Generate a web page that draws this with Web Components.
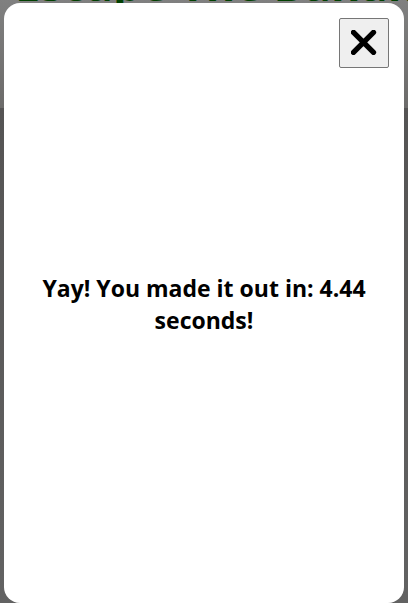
<!DOCTYPE html>
<html lang="en">
<head>
<meta charset="utf-8">
<meta name="viewport" content="width=device-width, initial-scale=1">
<title>Escape The Banana</title>
<style>
html, body { height: 100%; margin: 0; }
body { font-family: "Open Sans", "Noto Sans", sans-serif; color: #000; overflow: hidden; }
</style>
</head>
<body>
<game-page>
  <game-title slot="title">Escape The Banana</game-title>
  <win-dialog>Yay! You made it out in: 4.44 seconds!</win-dialog>
</game-page>
<script>
class GamePage extends HTMLElement {
  constructor() {
    super();
    this.attachShadow({ mode: "open" }).innerHTML = `
      <style>
        :host { display: grid; height: 100%; overflow: hidden; background: linear-gradient(#808080, #6c6b6a 108px, #555454 108px, #626262); }
        header, main { grid-area: 1 / 1; min-width: 0; min-height: 0; }
        main { display: grid; padding: 3px 4px 0; }
      </style>
      <header><slot name="title"></slot></header>
      <main><slot></slot></main>`;
  }
}
class GameTitle extends HTMLElement {
  constructor() {
    super();
    this.attachShadow({ mode: "open" }).innerHTML = `
      <style>
        :host { display: block; }
        h1 { margin: -46px 0 0; padding-left: 15px; font-size: 45px; line-height: 60px; font-weight: 700; color: #004000; white-space: nowrap; }
      </style>
      <h1><slot></slot></h1>`;
  }
}
class CloseButton extends HTMLElement {
  constructor() {
    super();
    this.attachShadow({ mode: "open" }).innerHTML = `
      <style>
        :host { display: block; }
        button { display: grid; place-items: center; box-sizing: border-box; width: 50px; height: 50px; margin: 0; padding: 0; border: 1px solid #767676; border-radius: 2px; background: #efefef; color: #000; cursor: pointer; }
        svg { display: block; width: 26px; height: 26px; }
      </style>
      <button type="button" aria-label="Close">
        <svg viewBox="0 0 26 26" aria-hidden="true"><path d="M2.5 2.3 22.5 22.3M22.5 2.3 2.5 22.3" fill="none" stroke="currentColor" stroke-width="5.3" stroke-linecap="round"/></svg>
      </button>`;
  }
}
class WinDialog extends HTMLElement {
  constructor() {
    super();
    this.attachShadow({ mode: "open" }).innerHTML = `
      <style>
        :host { display: grid; }
        section { display: grid; grid-template-rows: 50px 1fr 48px; box-sizing: border-box; padding: 15px; border-radius: 16px; background: #fff; }
        close-button { justify-self: end; }
        h2 { align-self: center; margin: 0; padding: 0 16px; font-size: 23px; line-height: 32px; font-weight: 700; text-align: center; }
      </style>
      <section role="dialog" aria-modal="true" aria-labelledby="message">
        <close-button></close-button>
        <h2 id="message"><slot></slot></h2>
      </section>`;
  }
}
customElements.define("game-page", GamePage);
customElements.define("game-title", GameTitle);
customElements.define("close-button", CloseButton);
customElements.define("win-dialog", WinDialog);
</script>
</body>
</html>
